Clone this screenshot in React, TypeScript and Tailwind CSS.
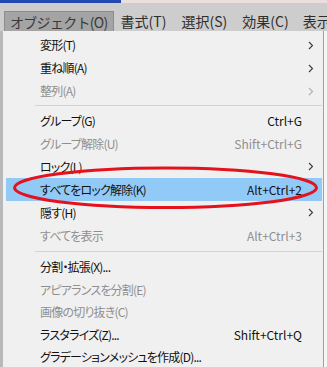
import React from "react";

type Item = { l: string; sc?: string; arrow?: boolean; dis?: boolean; hl?: boolean };

const groups: { h: string; items: Item[] }[] = [
  {
    h: "h-[23px]",
    items: [
      { l: "変形(T)", arrow: true },
      { l: "重ね順(A)", arrow: true },
      { l: "整列(A)", arrow: true, dis: true },
    ],
  },
  {
    h: "h-[23px]",
    items: [
      { l: "グループ(G)", sc: "Ctrl+G" },
      { l: "グループ解除(U)", sc: "Shift+Ctrl+G", dis: true },
      { l: "ロック(L)", arrow: true },
      { l: "すべてをロック解除(K)", sc: "Alt+Ctrl+2", hl: true },
      { l: "隠す(H)", arrow: true },
      { l: "すべてを表示", sc: "Alt+Ctrl+3", dis: true },
    ],
  },
  {
    h: "h-[22.5px]",
    items: [
      { l: "分割・拡張(X)..." },
      { l: "アピアランスを分割(E)", dis: true },
      { l: "画像の切り抜き(C)", dis: true },
      { l: "ラスタライズ(Z)...", sc: "Shift+Ctrl+Q" },
      { l: "グラデーションメッシュを作成(D)..." },
    ],
  },
];

function Chevron({ dis }: { dis?: boolean }) {
  return (
    <svg width="6" height="9" viewBox="0 0 6 9" className="block">
      <polyline
        points="1,1 4.5,4.5 1,8"
        fill="none"
        stroke={dis ? "#b0b0b0" : "#3a3a3a"}
        strokeWidth="1.1"
      />
    </svg>
  );
}

function Row({ it, h }: { it: Item; h: string }) {
  return (
    <div
      className={`${h} flex items-center ml-[3px] mr-[1px] pl-[34px] ${
        it.hl ? "bg-[#91c9f7]" : ""
      } ${it.dis ? "text-[#8f8f8f]" : "text-[#111]"}`}
    >
      <span className="flex-1 whitespace-nowrap tracking-[-0.8px]">{it.l}</span>
      {it.sc && <span className="whitespace-nowrap">{it.sc}</span>}
      <span className="w-[20px] h-full flex items-center pl-[6px]">
        {it.arrow && <Chevron dis={it.dis} />}
      </span>
    </div>
  );
}

export default function App() {
  return (
    <div className="relative w-[327px] h-[367px] overflow-hidden bg-[#cdcdcd] font-['Noto_Sans_CJK_JP',sans-serif]">
      <div className="flex h-[3px]">
        <div className="w-[121px] bg-[#2348b0]" />
        <div className="flex-1 bg-[#eadfdc]" />
      </div>
      <div className="h-[28px] flex items-end pl-[4px] text-[14px] text-[#2e2e2e] leading-none whitespace-nowrap">
        <div className="flex-none h-[20px] flex items-center border border-b-0 border-[#8c8c8c] bg-[#a4a4a4] pl-[5px] pr-[5px] text-[#3a3a3a] tracking-[-0.7px]">
          オブジェクト(O)
        </div>
        <div className="flex-none h-[20px] flex items-center pl-[7px] pr-[7px]">書式(T)</div>
        <div className="flex-none h-[20px] flex items-center pl-[8px] pr-[7px]">選択(S)</div>
        <div className="flex-none h-[20px] flex items-center pl-[8px] pr-[7px]">効果(C)</div>
        <div className="flex-none h-[20px] flex items-center pl-[7px]">表示(V)</div>
      </div>
      <div className="flex h-[336px]">
        <div className="w-[3px] bg-[#b9b9b9]" />
        <div className="w-[321px] bg-[#f0f0f0] border-r border-[#a0a0a0] pt-[2.5px] text-[12px] leading-none [font-feature-settings:'palt']">
          {groups.map((g, gi) => (
            <React.Fragment key={gi}>
              {gi > 0 && (
                <div className={`${gi === 1 ? "h-[6.5px]" : "h-[9px]"} flex items-center ml-[32px] mr-[1px]`}>
                  <div className="h-px w-full bg-[#d4d4d4]" />
                </div>
              )}
              {g.items.map((it, i) => (
                <Row key={i} it={it} h={g.h} />
              ))}
            </React.Fragment>
          ))}
        </div>
        <div className="flex-1 bg-[#f6f6f6]" />
      </div>
      <svg className="absolute left-0 top-0 pointer-events-none" width="327" height="367">
        <ellipse cx="165.5" cy="187.75" rx="151" ry="19.75" fill="none" stroke="#e3121d" strokeWidth="3" />
      </svg>
    </div>
  );
}
